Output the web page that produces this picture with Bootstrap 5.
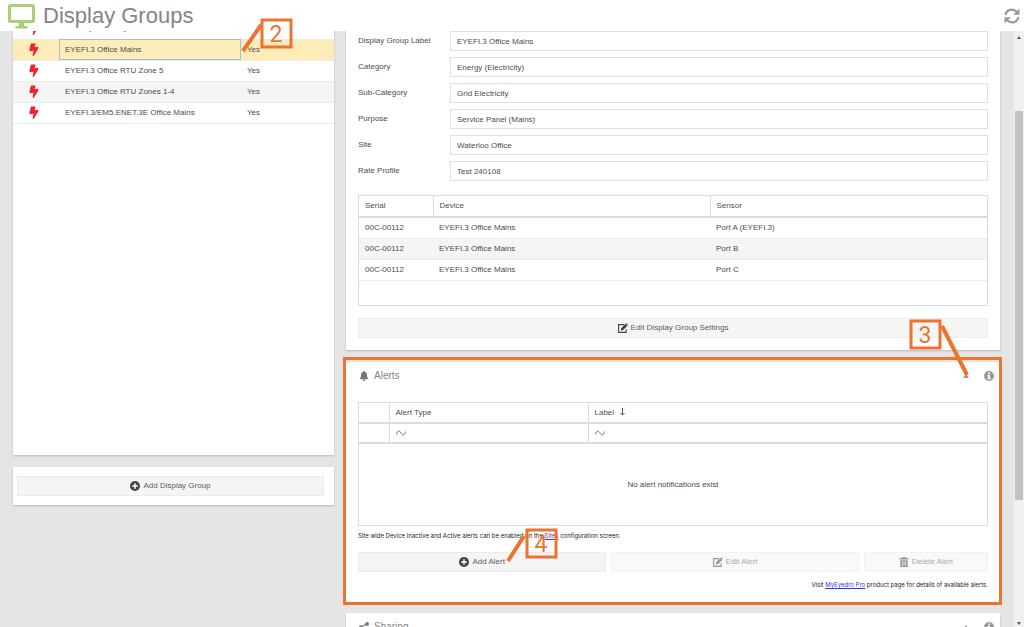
<!DOCTYPE html>
<html lang="en">
<head>
<meta charset="utf-8">
<meta name="viewport" content="width=device-width, initial-scale=1">
<title>Display Groups</title>
<link href="https://cdn.jsdelivr.net/npm/bootstrap@5.3.0/dist/css/bootstrap.min.css" rel="stylesheet">
<style>
:root{--ink:#4c4c4c;--line:#dcdcdc;--mark:#ec7430}
body{font-family:"Liberation Sans",Arial,sans-serif;font-size:8px;line-height:12px;color:var(--ink);background:#e5e5e5;height:100vh;overflow:hidden}
svg{display:block;flex:none}
.topbar{height:31px;z-index:2}
.topbar h1{font-size:22px;line-height:31px;color:#858585;font-weight:400}
.refresh{width:16px;height:16px;color:#999}
.shell{height:calc(100vh - 31px)}
.columns{display:grid;grid-template-columns:321fr 654fr;gap:12px;padding:0 14px 0 13px;align-items:start;min-width:0}
.panel{background:#fff;box-shadow:0 1px 2px rgba(0,0,0,.2)}
.pane{padding:0 12px}
.settings{padding-bottom:12px}
.groups{height:437px;margin-top:-13px}
.add-pane{padding:9px 10px 9px 4px}
.grid{--bs-table-bg:transparent;width:100%;table-layout:fixed;border-collapse:collapse;color:var(--ink)}
.grid th{font-weight:400}
.grid td,.grid th{height:21px;padding:0 6px;line-height:12px;vertical-align:middle}
.grid tbody tr{border-bottom:1px solid #ebebeb}
.grid .alt{background:#f5f5f5}
.grid .picked{background:#feecb8}
.picked .focus-cell{outline:1px solid #9cc3cf;outline-offset:-1px}
.bolt{width:10px;height:13px;color:#f0202c;margin-left:10px}
.framed{border:1px solid var(--line)}
.framed thead tr{border-bottom:2px solid var(--line)}
.framed thead th+th,.framed thead td+td{border-left:1px solid var(--line)}
.sources{height:111px;margin:14px 0 12px}
.alerts-grid{height:124px}
.alerts-grid .grid td,.alerts-grid .grid th{height:20px}
.fields{display:grid;grid-template-columns:92px 1fr;row-gap:6px;align-items:center}
.field{height:20px;border:1px solid #e0e0e0;padding:0 6px;color:var(--ink);font-size:8px;line-height:12px;border-radius:0;background:#fff;width:100%}
.tool{--bs-btn-font-size:8px;--bs-btn-line-height:12px;--bs-btn-padding-y:3px;--bs-btn-padding-x:6px;--bs-btn-border-radius:0;--bs-btn-color:#5c5c5c;--bs-btn-bg:#f5f5f5;--bs-btn-border-color:#ebebeb;--bs-btn-disabled-color:#aaa;--bs-btn-disabled-bg:#f9f9f9;--bs-btn-disabled-border-color:#f2f2f2;--bs-btn-disabled-opacity:1;height:20px;display:flex;align-items:center;justify-content:center;gap:3px;width:100%}
.tool svg{width:10px;height:10px;color:#444}
.tool:disabled svg{color:#999}
.actions{display:grid;grid-template-columns:248fr 247fr 124fr;gap:5px;margin:12px 0 9px}
.alerts{margin:12px 0 10px;padding-bottom:14px}
.sharing{height:120px}
.title-row{height:28px}
.alerts .title-row{margin-bottom:12px}
.section-title{font-size:10px;line-height:14px;color:#858585;font-weight:400;gap:5px;padding-left:1px}
.section-title svg{width:10px;height:10px;color:#777}
.title-tools{gap:15px;margin-right:-6px}
.icon-btn{border:0;background:none;padding:0;color:#999}
.note{font-family:Inter,"Liberation Sans",sans-serif;font-size:6px;line-height:8px;color:#222}
.site-note{margin-top:6px}
.note a{color:#33e}
.note a.seen{color:#7030b0}
.ring{position:absolute;inset:-5px -2px -2px -3px;border:3px solid var(--mark);pointer-events:none}
.callout{position:absolute;z-index:3;pointer-events:none;overflow:visible;stroke:var(--mark);stroke-width:3px;fill:none}
.callout .pointer{stroke-width:4px}
.callout text{stroke:none;fill:var(--mark);font:400 23px Roboto,sans-serif;text-anchor:middle}
.c2{left:229px;top:-1px}
.c3{right:31px;top:-45px}
.c4{left:161px;top:165px}
.scroller{flex:none;width:10px;background:#f0f0f0;padding:5px 1px 2px 1px;color:#555}
.thumb{background:#c1c1c1;height:389px;margin-top:72px}
</style>
</head>
<body>
<svg width="0" height="0" class="position-absolute" aria-hidden="true">
  <symbol id="i-bolt" viewBox="0 0 10 13"><path fill="currentColor" d="M2 .5h4.600L5.600 4.200 9.300 3.800 9 6 4.600 13H3.600L4.500 7.800.6 8.200.5 6z"/></symbol>
  <symbol id="i-plus" viewBox="0 0 16 16"><circle cx="8" cy="8" r="8" fill="currentColor"/><path stroke="#fff" stroke-width="2.400" d="M8 3.500v9M3.500 8h9"/></symbol>
  <symbol id="i-edit" viewBox="0 0 16 16"><path fill="none" stroke="currentColor" stroke-width="1.800" d="M10 2.500H1v12.500h12V10"/><path fill="currentColor" d="M5 8.500 12 1.200l3 3L8 11.500l-3.500.5zM12.700.6 13.500 0 16 2.500l-.7.900z"/></symbol>
  <symbol id="i-trash" viewBox="0 0 16 16"><path fill="currentColor" d="M5 0h6v1.500h4V4H1V1.500h4zM2 5h12v11H2z"/><path stroke="#f9f9f9" stroke-width="1" d="M5.500 7v7M8 7v7M10.500 7v7"/></symbol>
  <symbol id="i-info" viewBox="0 0 16 16"><circle cx="8" cy="8" r="8" fill="currentColor"/><path fill="#fff" d="M6.700 2.500h2.800V5H6.700zM5.700 6.500h3.800v4.700h1V13H5.700v-1.800h1V8.200h-1z"/></symbol>
  <symbol id="i-bell" viewBox="0 0 16 16"><path fill="currentColor" d="M8 0c.8 0 1.200.5 1.200 1.200C12 2 12.800 4 12.800 6.500c0 3 .8 4.500 2.200 6.500H1c1.400-2 2.200-3.500 2.200-6.500C3.200 4 4 2 6.800 1.200 6.800.5 7.200 0 8 0M6 14h4c0 1.300-.9 2-2 2s-2-.7-2-2"/></symbol>
  <symbol id="i-share" viewBox="0 0 16 16"><path fill="none" stroke="currentColor" stroke-width="1.800" d="M13 3 3 8l10 5"/><g fill="currentColor"><circle cx="13" cy="3" r="3"/><circle cx="3" cy="8" r="3"/><circle cx="13" cy="13" r="3"/></g></symbol>
  <symbol id="i-wave" viewBox="0 0 10 6"><path fill="none" stroke="#777" d="M.5 4.500C1.500 0 3.500.5 5 3s3.500 3 4.500-1.500"/></symbol>
</svg>

<header class="topbar bg-white position-relative d-flex align-items-center justify-content-between ps-2 pe-1">
  <div class="d-flex align-items-center gap-2">
    <svg width="27" height="26" viewBox="0 0 27 26" aria-hidden="true"><rect x="1.500" y="2.500" width="24" height="16" rx="1" fill="none" stroke="#a9d077" stroke-width="3"/><path fill="#a9d077" d="M11 19h5v4h3.500v2.500h-12V23H11z"/></svg>
    <h1 class="m-0">Display Groups</h1>
  </div>
  <button class="icon-btn" aria-label="Refresh"><svg class="refresh" viewBox="0 0 16 16"><path fill="none" stroke="currentColor" stroke-width="2.200" d="M1.500 7C2.500 1.500 9 0 13 4M14.500 9C13.500 14.500 7 16 3 12"/><path fill="currentColor" d="M15.500.5v6.300H9.200zM.5 15.500V9.200h6.300z"/></svg></button>
</header>

<div class="shell d-flex">
  <main class="columns flex-fill">
    <div class="d-flex flex-column">
      <section class="panel groups position-relative mb-2">
        <table class="grid">
          <colgroup><col style="width:46px"><col style="width:182px"><col></colgroup>
          <tbody>
            <tr><td><svg class="bolt"><use href="#i-bolt"/></svg></td><td>EYE-IQ GEN3 IQ GEN3</td><td>Yes</td></tr>
            <tr class="picked"><td><svg class="bolt"><use href="#i-bolt"/></svg></td><td class="focus-cell">EYEFI.3 Office Mains</td><td>Yes</td></tr>
            <tr><td><svg class="bolt"><use href="#i-bolt"/></svg></td><td>EYEFI.3 Office RTU Zone 5</td><td>Yes</td></tr>
            <tr class="alt"><td><svg class="bolt"><use href="#i-bolt"/></svg></td><td>EYEFI.3 Office RTU Zones 1-4</td><td>Yes</td></tr>
            <tr><td><svg class="bolt"><use href="#i-bolt"/></svg></td><td>EYEFI.3/EM5.ENET.3E Office Mains</td><td>Yes</td></tr>
          </tbody>
        </table>
        <svg class="callout c2" width="51" height="34"><path class="pointer" d="M1 34 19 8"/><rect x="20" y="3" width="29" height="27"/><text x="34" y="25">2</text></svg>
      </section>
      <section class="panel mt-1 add-pane">
        <button class="btn tool"><svg><use href="#i-plus"/></svg>Add Display Group</button>
      </section>
    </div>

    <div class="d-flex flex-column">
      <section class="panel pane settings">
        <div class="fields">
          <label for="f1">Display Group Label</label><input id="f1" class="field" value="EYEFI.3 Office Mains" readonly>
          <label for="f2">Category</label><input id="f2" class="field" value="Energy (Electricity)" readonly>
          <label for="f3">Sub-Category</label><input id="f3" class="field" value="Grid Electricity" readonly>
          <label for="f4">Purpose</label><input id="f4" class="field" value="Service Panel (Mains)" readonly>
          <label for="f5">Site</label><input id="f5" class="field" value="Waterloo Office" readonly>
          <label for="f6">Rate Profile</label><input id="f6" class="field" value="Test 240108" readonly>
        </div>
        <div class="framed sources">
          <table class="grid">
            <colgroup><col style="width:74px"><col><col></colgroup>
            <thead><tr><th>Serial</th><th>Device</th><th>Sensor</th></tr></thead>
            <tbody>
              <tr><td>00C-00112</td><td>EYEFI.3 Office Mains</td><td>Port A (EYEFI.3)</td></tr>
              <tr class="alt"><td>00C-00112</td><td>EYEFI.3 Office Mains</td><td>Port B</td></tr>
              <tr><td>00C-00112</td><td>EYEFI.3 Office Mains</td><td>Port C</td></tr>
            </tbody>
          </table>
        </div>
        <button class="btn tool"><svg><use href="#i-edit"/></svg>Edit Display Group Settings</button>
      </section>

      <section class="panel pane alerts position-relative">
        <div class="title-row d-flex justify-content-between align-items-center">
          <h2 class="section-title m-0 d-flex align-items-center"><svg><use href="#i-bell"/></svg>Alerts</h2>
          <div class="title-tools d-flex align-items-center">
            <button class="icon-btn" aria-label="Collapse Alerts"><svg width="6" height="4"><path fill="currentColor" d="M0 4 3 0l3 4z"/></svg></button>
            <button class="icon-btn" aria-label="About Alerts"><svg width="10" height="10"><use href="#i-info"/></svg></button>
          </div>
        </div>
        <div class="framed alerts-grid d-flex flex-column">
          <table class="grid">
            <colgroup><col style="width:30px"><col style="width:199px"><col></colgroup>
            <thead>
              <tr><th></th><th>Alert Type</th><th>Label <svg class="d-inline-block ms-1" width="5" height="8" viewBox="0 0 5 8"><path fill="none" stroke="#555" d="M2.500 0v7M.5 5l2 2 2-2"/></svg></th></tr>
              <tr><td></td><td><svg width="10" height="6"><use href="#i-wave"/></svg></td><td><svg width="10" height="6"><use href="#i-wave"/></svg></td></tr>
            </thead>
          </table>
          <div class="flex-fill d-flex align-items-center justify-content-center">No alert notifications exist</div>
        </div>
        <p class="note mb-0 site-note">Site wide Device Inactive and Active alerts can be enabled on the <a class="seen" href="#">Sites</a> configuration screen.</p>
        <div class="actions">
          <button class="btn tool"><svg><use href="#i-plus"/></svg>Add Alert</button>
          <button class="btn tool" disabled><svg><use href="#i-edit"/></svg>Edit Alert</button>
          <button class="btn tool" disabled><svg><use href="#i-trash"/></svg>Delete Alert</button>
        </div>
        <p class="note mb-0 text-end">Visit <a href="#">MyEyedro Pro</a> product page for details of available alerts.</p>
        <div class="ring"></div>
        <svg class="callout c3" width="62" height="60"><rect x="4" y="4" width="29" height="27"/><path class="pointer" d="m35 9 25 49"/><text x="18" y="26">3</text></svg>
        <svg class="callout c4" width="51" height="36"><path class="pointer" d="M1 34 17 9"/><rect x="20" y="3" width="29" height="27"/><text x="34" y="25">4</text></svg>
      </section>

      <section class="panel pane sharing">
        <div class="title-row d-flex justify-content-between align-items-center">
          <h2 class="section-title m-0 d-flex align-items-center"><svg><use href="#i-share"/></svg>Sharing</h2>
          <div class="title-tools d-flex align-items-center">
            <button class="icon-btn" aria-label="Collapse Sharing"><svg width="6" height="4"><path fill="currentColor" d="M0 4 3 0l3 4z"/></svg></button>
            <button class="icon-btn" aria-label="About Sharing"><svg width="10" height="10"><use href="#i-info"/></svg></button>
          </div>
        </div>
      </section>
    </div>
  </main>
  <div class="scroller d-flex flex-column" aria-hidden="true">
    <svg class="mx-auto" width="4" height="3"><path fill="currentColor" d="M0 3 2 0l2 3z"/></svg>
    <div class="thumb"></div>
    <svg class="mx-auto mt-auto" width="4" height="3"><path fill="currentColor" d="M0 0h4L2 3z"/></svg>
  </div>
</div>
</body>
</html>
